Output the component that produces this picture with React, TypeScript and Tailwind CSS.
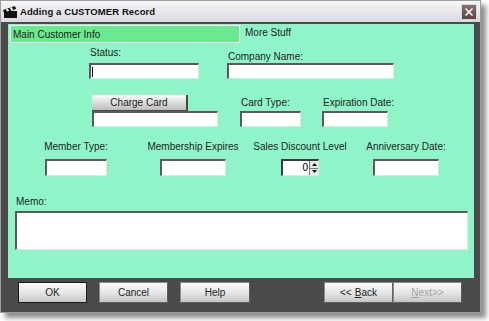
import React from "react"

const font = "font-['Liberation_Sans',Arial,sans-serif]"

function Field({ w, h = 16, children }: { w: number; h?: number; children?: React.ReactNode }) {
  return (
    <div
      className="bg-white border-t-2 border-l-2 border-b border-r border-t-[#5a5a5a] border-l-[#5a5a5a] border-b-[#e4e4e4] border-r-[#e4e4e4] relative"
      style={{ width: w, height: h }}
    >
      {children}
    </div>
  )
}

function Label({ children, className = "" }: { children: React.ReactNode; className?: string }) {
  return <div className={`text-[10px] leading-[12px] text-[#1e1e1e] whitespace-nowrap ${className}`}>{children}</div>
}

function Btn({ children, w, def, disabled }: { children: React.ReactNode; w: number; def?: boolean; disabled?: boolean }) {
  return (
    <div
      className={`h-[21px] flex items-center justify-center text-[10px] bg-gradient-to-b from-[#fbfbfb] via-[#e6e6e6] to-[#c6c6c6] border ${
        def ? "border-[#1a1a1a]" : "border-[#8a8a8a] border-b-[#5e5e5e] border-r-[#5e5e5e]"
      } ${disabled ? "text-[#a4a4a4]" : "text-[#222]"}`}
      style={{ width: w }}
    >
      {children}
    </div>
  )
}

export default function App() {
  return (
    <div className={`w-[489px] h-[321px] bg-white ${font}`}>
      <div className="w-[481px] h-[313px] flex flex-col border border-[#9c9c9c] shadow-[5px_5px_5px_rgba(0,0,0,0.45)]">
        {/* title bar */}
        <div className="h-[21px] flex items-center bg-gradient-to-b from-[#f7f7f9] to-[#d9d9e0] pl-[2px] pr-[3px]">
          <svg width="15" height="12" viewBox="0 0 15 12" className="mr-[2px]">
            <rect x="1" y="5" width="13" height="7" fill="#111" />
            <polygon points="0,4 12,0 13,3 1,7" fill="#111" />
            <polygon points="3,3 5,2.4 6,5 4,5.6" fill="#fff" />
            <polygon points="7,1.8 9,1.2 10,3.8 8,4.4" fill="#fff" />
          </svg>
          <span className="text-[9.5px] font-bold text-[#111] tracking-[0.1px] mt-[1px]">Adding a CUSTOMER Record</span>
          <div className="ml-auto w-[16px] h-[16px] mt-[1px] border border-[#d8d8d8] bg-gradient-to-b from-[#8a7070] to-[#5a4343] flex items-center justify-center">
            <svg width="10" height="10" viewBox="0 0 10 10">
              <path d="M1.5 1.5 L8.5 8.5 M8.5 1.5 L1.5 8.5" stroke="#fff" strokeWidth="1.6" />
            </svg>
          </div>
        </div>

        {/* body */}
        <div className="flex-1 bg-[#4a4a4a] pl-[7px] pt-[2px] flex flex-col">
          <div className="w-[466px] h-[254px] bg-[#8ff5c9] flex flex-col">
            {/* tabs */}
            <div className="h-[19px] flex">
              <div className="ml-[2px] mt-[1px] w-[230px] h-[18px] bg-[#6be98f] border border-white pl-[2px] pt-[3px]">
                <Label>Main Customer Info</Label>
              </div>
              <Label className="ml-[5px] mt-[3px]">More Stuff</Label>
            </div>

            {/* row 1 */}
            <div className="flex items-end mt-[4px] ml-[81px]">
              <div className="flex flex-col">
                <Label className="mb-[4px] ml-[1px]">Status:</Label>
                <Field w={110}>
                  <div className="absolute left-[1px] top-[2px] w-[1px] h-[10px] bg-black" />
                </Field>
              </div>
              <div className="flex flex-col ml-[28px]">
                <Label className="ml-[1px]">Company Name:</Label>
                <Field w={167} />
              </div>
            </div>

            {/* row 2 */}
            <div className="flex items-end mt-[16px] ml-[84px]">
              <div className="flex flex-col">
                <div className="w-[96px] h-[16px] flex items-center justify-center text-[10px] text-[#222] bg-gradient-to-b from-[#fdfdfd] to-[#bdbdbd] border-r-2 border-b border-[#4a4a4a]">
                  Charge Card
                </div>
                <Field w={126} />
              </div>
              <div className="flex flex-col ml-[22px]">
                <Label className="mb-[2px] ml-[1px]">Card Type:</Label>
                <Field w={61} />
              </div>
              <div className="flex flex-col ml-[21px]">
                <Label className="mb-[2px] ml-[1px]">Expiration Date:</Label>
                <Field w={66} />
              </div>
            </div>

            {/* row 3 */}
            <div className="flex mt-[14px] ml-[18px]">
              <div className="w-[100px] flex flex-col items-center">
                <Label className="mb-[6px]">Member Type:</Label>
                <Field w={62} h={17} />
              </div>
              <div className="w-[100px] flex flex-col items-center ml-[17px]">
                <Label className="mb-[6px]">Membership Expires</Label>
                <Field w={66} h={17} />
              </div>
              <div className="w-[100px] flex flex-col items-center ml-[7px]">
                <Label className="mb-[6px]">Sales Discount Level</Label>
                <div className="w-[38px] h-[17px] bg-white border-t-2 border-l-2 border-b border-r border-t-[#3a3a3a] border-l-[#3a3a3a] border-b-[#e4e4e4] border-r-[#e4e4e4] flex items-center">
                  <span className="flex-1 text-right text-[10px] leading-[12px] pr-[1px]">0</span>
                  <div className="w-[9px] h-full flex flex-col border-l border-[#777] bg-[#e8e8e8]">
                    <div className="flex-1 flex items-center justify-center border-b border-[#777]">
                      <svg width="5" height="3" viewBox="0 0 5 3"><polygon points="2.5,0 5,3 0,3" fill="#111" /></svg>
                    </div>
                    <div className="flex-1 flex items-center justify-center">
                      <svg width="5" height="3" viewBox="0 0 5 3"><polygon points="0,0 5,0 2.5,3" fill="#111" /></svg>
                    </div>
                  </div>
                </div>
              </div>
              <div className="w-[100px] flex flex-col items-center ml-[6px]">
                <Label className="mb-[6px]">Anniversary Date:</Label>
                <Field w={66} h={17} />
              </div>
            </div>

            {/* memo */}
            <div className="flex flex-col mt-[20px] ml-[7px]">
              <Label className="mb-[3px] ml-[1px]">Memo:</Label>
              <Field w={453} h={39} />
            </div>
          </div>

          {/* buttons */}
          <div className="flex mt-[4px] ml-[10px]">
            <Btn w={69} def>OK</Btn>
            <div className="ml-[12px]">
              <Btn w={69}>Cancel</Btn>
            </div>
            <div className="ml-[12px]">
              <Btn w={70}>Help</Btn>
            </div>
            <div className="ml-[74px] flex">
              <Btn w={69}>
                &lt;&lt; <span className="underline ml-[3px]">B</span>ack
              </Btn>
              <Btn w={69} disabled>
                <span className="underline">N</span>ext&gt;&gt;
              </Btn>
            </div>
          </div>
        </div>
      </div>
    </div>
  )
}
